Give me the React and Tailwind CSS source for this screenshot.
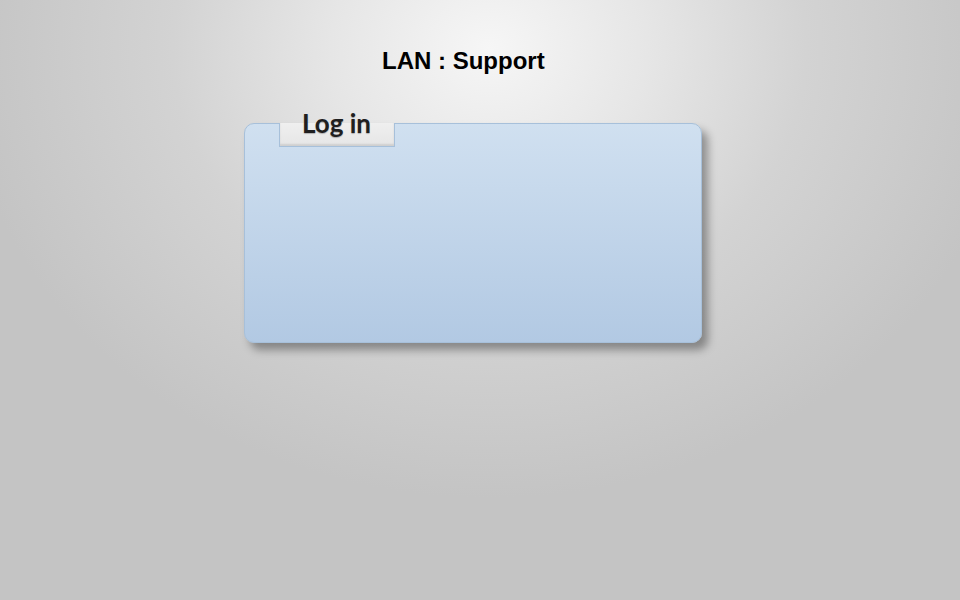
import React from 'react';

const App = () => {
  return (
    <div className="min-h-screen w-full bg-[#c4c4c4] bg-[radial-gradient(ellipse_55%_75%_at_51%_8%,#f6f6f6_0%,#e6e6e6_30%,#d3d3d3_60%,#c4c4c4_100%)] font-['Liberation_Sans',Arial,sans-serif]">
      <div className="flex flex-col pt-[46px]">
        {/* title */}
        <h1 className="ml-[382px] text-[24px] leading-[30px] font-bold text-black">LAN : Support</h1>

        {/* login panel */}
        <div className="relative ml-[244px] mt-[47px] h-[220px] w-[458px] rounded-[10px] border border-[#a7c0da] bg-gradient-to-b from-[#d0e0f0] to-[#b2c9e3] shadow-[6px_7px_8px_rgba(0,0,0,0.35)]">
          <div className="absolute left-[34px] top-[-1px] h-[24px] w-[116px] border-x border-b border-[#a7c0da] bg-gradient-to-b from-[#efefef] to-[#e6e6e6] shadow-[inset_0_-2px_2px_rgba(0,0,0,0.1)]" />
          <span className="absolute left-[57px] top-[-17px] font-['Lato',sans-serif] text-[26px] font-bold leading-[32px] text-[#1f1f1f] [text-shadow:0_1px_1px_rgba(0,0,0,0.25)]">
            Log in
          </span>
        </div>
      </div>
    </div>
  );
};

export default App;
